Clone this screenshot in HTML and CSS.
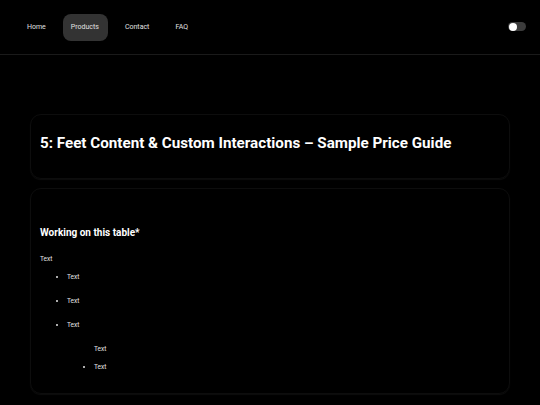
FILE: index.html
```html
<!DOCTYPE html>
<html lang="en">
<head>
<meta charset="utf-8">
<title>Sample Price Guide</title>
<link rel="stylesheet" href="styles.css">
</head>
<body>
<header class="nav">
  <nav class="links">
    <a class="link" href="#">Home</a>
    <a class="link active" href="#">Products</a>
    <a class="link" href="#">Contact</a>
    <a class="link" href="#">FAQ</a>
  </nav>
  <div class="toggle"><span class="knob"></span></div>
</header>
<main class="main">
  <section class="card hero">
    <h1 class="title">5: Feet Content &amp; Custom Interactions – Sample Price Guide</h1>
  </section>
  <section class="card body">
    <h2 class="subtitle">Working on this table*</h2>
    <p class="txt">Text</p>
    <ul class="list">
      <li class="item">Text</li>
      <li class="item">Text</li>
      <li class="item">Text</li>
    </ul>
    <div class="nested">
      <p class="txt">Text</p>
      <ul class="list inner">
        <li class="item">Text</li>
      </ul>
    </div>
  </section>
</main>
</body>
</html>
```

FILE: styles.css
```css
* { box-sizing: border-box; }
html, body { margin: 0; padding: 0; background: #000; }
body {
  font-family: Roboto, "Liberation Sans", sans-serif;
  color: #e6e6e6;
  width: 540px;
  height: 405px;
  overflow: hidden;
}
.nav {
  height: 55px;
  border-bottom: 1px solid #1a1a1a;
  display: flex;
  align-items: center;
  justify-content: space-between;
  padding: 0 14px 0 18px;
}
.links { display: flex; gap: 8px; align-items: center; }
.link {
  color: #e0e0e0;
  text-decoration: none;
  font-size: 7px;
  line-height: 27px;
  height: 27px;
  padding: 0 9px;
  border-radius: 8px;
}
.link.active { background: #333; padding: 0 9px 0 8px; }
.toggle {
  width: 18px;
  height: 9px;
  border-radius: 5px;
  background: #3c3c3c;
  display: flex;
  align-items: center;
  padding: 0 1px;
  margin-top: -1px;
}
.knob { width: 8px; height: 8px; border-radius: 50%; background: #fff; }
.main { padding: 59px 30px 0; display: flex; flex-direction: column; gap: 9px; }
.card {
  border: 1px solid #0d0d0d;
  border-radius: 11px;
  box-shadow: 0 1px 1px rgba(255,255,255,0.05);
}
.hero { padding: 19px 9px 26px; }
.title {
  margin: 0;
  font-size: 15.2px;
  line-height: 18px;
  font-weight: 700;
  color: #fff;
}
.body { padding: 37px 9px 21px; }
.subtitle {
  margin: 0 0 14px;
  font-size: 10px;
  line-height: 14px;
  font-weight: 700;
  color: #fff;
}
.txt { margin: 0; font-size: 6.5px; line-height: 10px; }
.list { margin: 8px 0 0; padding-left: 27px; }
.item { font-size: 6.5px; line-height: 10px; margin-bottom: 14px; }
.item:last-child { margin-bottom: 0; }
.nested { margin: 14px 0 0 54px; }
.list.inner { padding-left: 0; }
```
